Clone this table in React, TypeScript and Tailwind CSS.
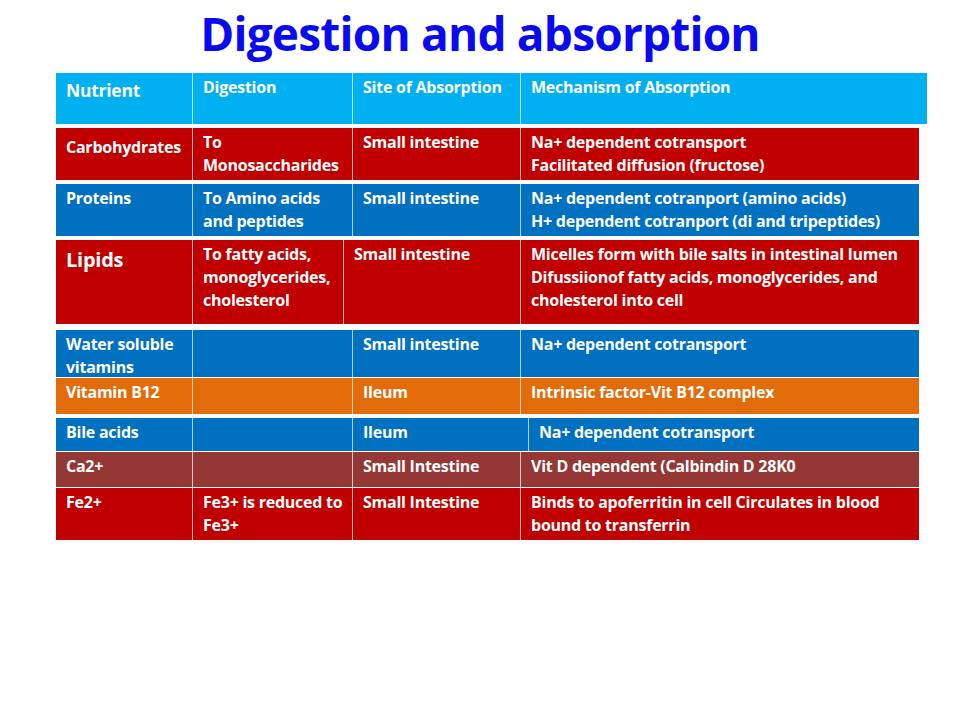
import React from "react";

type Cell = { text: React.ReactNode; w: number; cls?: string };
type Row = { bg: string; h: string; mt: string; cells: Cell[] };

const font = { fontFamily: "'Open Sans', Lato, Arial, sans-serif" };

const rows: Row[] = [
  {
    bg: "bg-[#c00000]",
    h: "h-[52px]",
    mt: "mt-[4px]",
    cells: [
      { text: "Carbohydrates", w: 136, cls: "pt-[8px]" },
      { text: <>To<br />Monosaccharides</>, w: 160 },
      { text: "Small intestine", w: 168 },
      { text: <>Na+ dependent cotransport<br />Facilitated diffusion (fructose)</>, w: 399 },
    ],
  },
  {
    bg: "bg-[#0070c0]",
    h: "h-[52px]",
    mt: "mt-[4px]",
    cells: [
      { text: "Proteins", w: 136 },
      { text: <>To Amino acids<br />and peptides</>, w: 160 },
      { text: "Small intestine", w: 168 },
      { text: <>Na+ dependent cotranport (amino acids)<br />H+ dependent cotranport (di and tripeptides)</>, w: 399 },
    ],
  },
  {
    bg: "bg-[#c00000]",
    h: "h-[84px]",
    mt: "mt-[4px]",
    cells: [
      { text: "Lipids", w: 136, cls: "text-[20px] pt-[8px]" },
      { text: <>To fatty acids,<br />monoglycerides,<br />cholesterol</>, w: 151 },
      { text: "Small intestine", w: 177 },
      { text: <>Micelles form with bile salts in intestinal lumen<br />Difussiionof fatty acids, monoglycerides, and<br />cholesterol into cell</>, w: 399 },
    ],
  },
  {
    bg: "bg-[#0070c0]",
    h: "h-[47px]",
    mt: "mt-[6px]",
    cells: [
      { text: <>Water soluble<br />vitamins</>, w: 136 },
      { text: "", w: 160 },
      { text: "Small intestine", w: 168 },
      { text: "Na+ dependent cotransport", w: 399 },
    ],
  },
  {
    bg: "bg-[#e36c0a]",
    h: "h-[36px]",
    mt: "mt-[1px]",
    cells: [
      { text: "Vitamin B12", w: 136 },
      { text: "", w: 160 },
      { text: "Ileum", w: 168 },
      { text: "Intrinsic factor-Vit B12 complex", w: 399 },
    ],
  },
  {
    bg: "bg-[#0070c0]",
    h: "h-[33px]",
    mt: "mt-[4px]",
    cells: [
      { text: "Bile acids", w: 136 },
      { text: "", w: 160 },
      { text: "Ileum", w: 176 },
      { text: "Na+ dependent cotransport", w: 391 },
    ],
  },
  {
    bg: "bg-[#953735]",
    h: "h-[35px]",
    mt: "mt-[1px]",
    cells: [
      { text: "Ca2+", w: 136 },
      { text: "", w: 160 },
      { text: "Small Intestine", w: 168 },
      { text: "Vit D dependent (Calbindin D 28K0", w: 399 },
    ],
  },
  {
    bg: "bg-[#c00000]",
    h: "h-[52px]",
    mt: "mt-[1px]",
    cells: [
      { text: "Fe2+", w: 136 },
      { text: <>Fe3+ is reduced to<br />Fe3+</>, w: 160 },
      { text: "Small Intestine", w: 168 },
      { text: <>Binds to apoferritin in cell Circulates in blood<br />bound to transferrin</>, w: 399 },
    ],
  },
];

const cellBase =
  "shrink-0 h-full pl-[10px] pt-[3px] text-white font-bold text-[16px] leading-[23px] tracking-[-0.25px] whitespace-nowrap";

function RowView({ row }: { row: Row }) {
  return (
    <div className={`flex ${row.bg} ${row.h} ${row.mt} w-[863px] outline outline-1 outline-white/60`}>
      {row.cells.map((c, i) => (
        <div
          key={i}
          style={{ width: c.w }}
          className={`${cellBase} ${i > 0 ? "border-l border-white/70" : ""} ${c.cls ?? ""}`}
        >
          {c.text}
        </div>
      ))}
    </div>
  );
}

export default function App() {
  return (
    <div className="w-[960px] h-[720px] bg-white relative overflow-hidden" style={font}>
      <h1 className="text-center text-[#0a0af0] font-bold text-[46px] leading-[56px] pt-[5px] tracking-[-0.8px]">
        Digestion and absorption
      </h1>
      <div className="ml-[56px] mt-[12px] flex flex-col">
        <div className="flex bg-[#00b0f0] h-[51px] w-[871px] outline outline-1 outline-white/60">
          {[
            { t: "Nutrient", w: 136, cls: "text-[17.5px] pt-[6px]" },
            { t: "Digestion", w: 160 },
            { t: "Site of Absorption", w: 168 },
            { t: "Mechanism of Absorption", w: 407 },
          ].map((c, i) => (
            <div
              key={i}
              style={{ width: c.w }}
              className={`${cellBase} ${i > 0 ? "border-l border-white/70" : ""} ${c.cls ?? ""}`}
            >
              {c.t}
            </div>
          ))}
        </div>
        {rows.map((r, i) => (
          <RowView key={i} row={r} />
        ))}
      </div>
    </div>
  );
}
